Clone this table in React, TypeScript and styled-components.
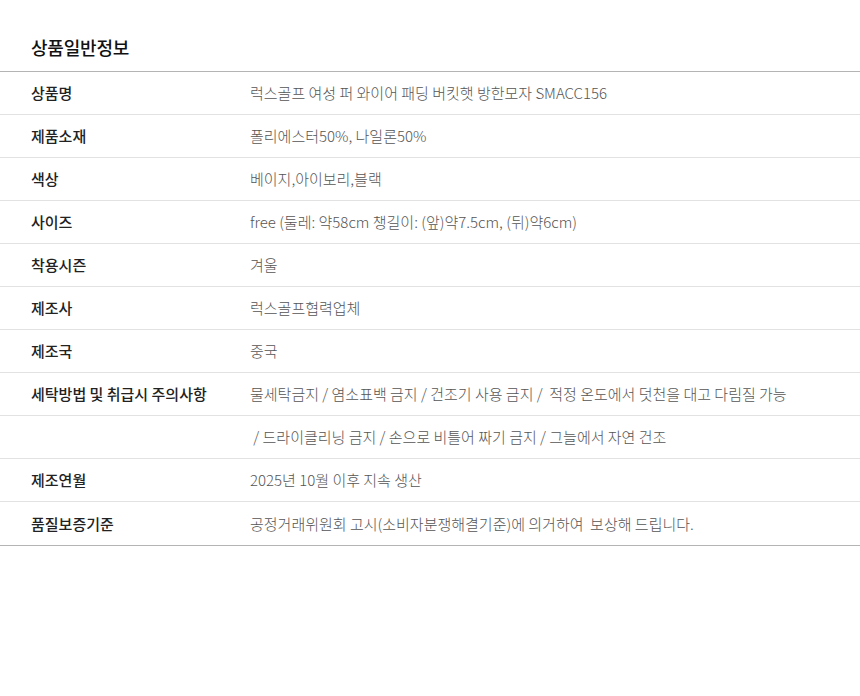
import React from "react";
import styled, { createGlobalStyle } from "styled-components";

const Global = createGlobalStyle`
  html, body { margin: 0; padding: 0; background: #fff; }
  body { font-family: "Noto Sans CJK KR", "Noto Sans", sans-serif; }
`;

const Wrap = styled.div`
  width: 860px;
`;

const Title = styled.h2`
  margin: 0;
  height: 71px;
  box-sizing: border-box;
  padding: 34px 0 0 31px;
  font-size: 18px;
  line-height: 26px;
  font-weight: 500;
  color: #111;
  letter-spacing: -0.2px;
`;

const Table = styled.div`
  border-top: 1px solid #b4b4b4;
  border-bottom: 1px solid #b4b4b4;
`;

const Row = styled.div<{ $last?: boolean }>`
  display: grid;
  grid-template-columns: 250px 1fr;
  height: 43px;
  box-sizing: border-box;
  align-items: center;
  border-bottom: ${(p) => (p.$last ? "none" : "1px solid #e2e2e2")};
`;

const Label = styled.div`
  padding-left: 31px;
  font-size: 15px;
  line-height: 20px;
  font-weight: 500;
  color: #222;
`;

const Value = styled.div`
  font-size: 15px;
  line-height: 20px;
  font-weight: 300;
  color: #555;
  white-space: pre;
`;

const rows: [string, string][] = [
  ["상품명", "럭스골프 여성 퍼 와이어 패딩 버킷햇 방한모자 SMACC156"],
  ["제품소재", "폴리에스터50%, 나일론50%"],
  ["색상", "베이지,아이보리,블랙"],
  ["사이즈", "free (둘레: 약58cm 챙길이: (앞)약7.5cm, (뒤)약6cm)"],
  ["착용시즌", "겨울"],
  ["제조사", "럭스골프협력업체"],
  ["제조국", "중국"],
  ["세탁방법 및 취급시 주의사항", "물세탁금지 / 염소표백 금지 / 건조기 사용 금지 /  적정 온도에서 덧천을 대고 다림질 가능"],
  ["", " / 드라이클리닝 금지 / 손으로 비틀어 짜기 금지 / 그늘에서 자연 건조"],
  ["제조연월", "2025년 10월 이후 지속 생산"],
  ["품질보증기준", "공정거래위원회 고시(소비자분쟁해결기준)에 의거하여  보상해 드립니다."],
];

export default function App() {
  return (
    <>
      <Global />
      <Wrap>
        <Title>상품일반정보</Title>
        <Table>
          {rows.map(([k, v], i) => (
            <Row key={i} $last={i === rows.length - 1}>
              <Label>{k}</Label>
              <Value>{v}</Value>
            </Row>
          ))}
        </Table>
      </Wrap>
    </>
  );
}
